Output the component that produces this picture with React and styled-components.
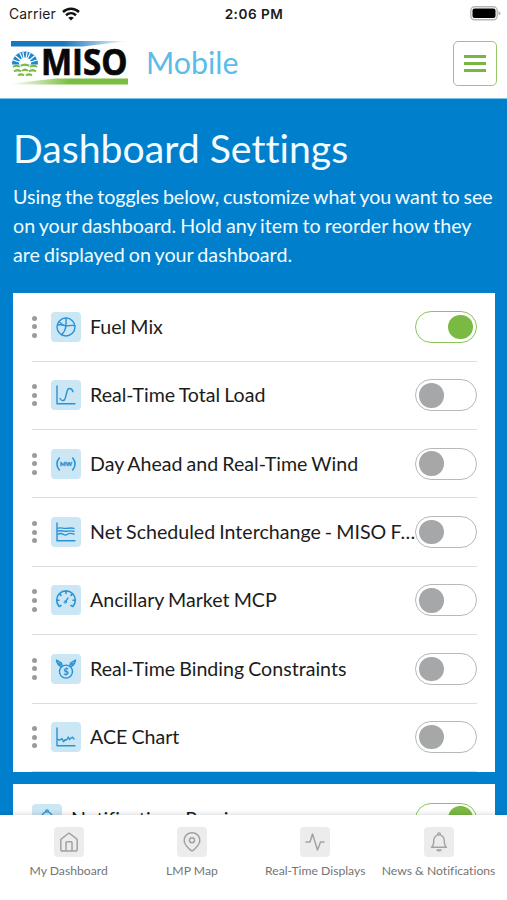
import React from 'react';
import styled, { createGlobalStyle } from 'styled-components';

const GlobalStyle = createGlobalStyle`
  * {
    box-sizing: border-box;
  }
  body {
    margin: 0;
    background: #fff;
    font-family: Lato, "Open Sans", sans-serif;
    font-variant-ligatures: none;
  }
`;

const Screen = styled.div`
  display: flex;
  flex-direction: column;
  height: 900px;
  overflow: hidden;
  background: #fff;
`;

const StatusBar = styled.div`
  display: grid;
  grid-template-columns: 1fr auto 1fr;
  align-items: center;
  flex: none;
  height: 28px;
  padding: 0 8px 0 9px;
  color: #1b1b1b;
  font-family: Inter, sans-serif;
`;

const Carrier = styled.div`
  display: flex;
  align-items: center;
  gap: 6px;
  font-size: 13.9px;
  letter-spacing: 0.2px;
`;

const Clock = styled.div`
  font-size: 13.6px;
  font-weight: 600;
  letter-spacing: 0.5px;
`;

const Battery = styled.div`
  display: flex;
  justify-content: flex-end;
  margin: 0 -2px 1px 0;
`;

const Header = styled.header`
  display: flex;
  align-items: center;
  flex: none;
  height: 71px;
  padding: 0 10px 0 10px;
  border-bottom: 1px solid #7cc3e8;
`;

const AppName = styled.div`
  flex: 1;
  padding: 0 0 2px 17px;
  color: #5bbce8;
  font-size: 30.4px;
  line-height: 40px;
`;

const MenuButton = styled.button`
  display: flex;
  flex-direction: column;
  align-items: center;
  justify-content: center;
  gap: 4px;
  width: 44px;
  height: 45px;
  padding: 0;
  border: 1.5px solid #98ca6c;
  border-radius: 5px;
  background: #fff;
`;

const MenuLine = styled.span`
  width: 22px;
  height: 3px;
  background: #78b644;
`;

const Content = styled.main`
  flex: 1;
  min-height: 0;
  overflow: hidden;
  padding: 26px 12px 0 13px;
  background: #0080cc;
  color: #f2fbff;
`;

const Title = styled.h1`
  margin: 0;
  font-size: 39.2px;
  font-weight: 400;
  line-height: 46px;
`;

const Intro = styled.p`
  margin: 10.6px 0 24px;
  font-size: 19.7px;
  line-height: 29.2px;
  word-spacing: -1px;
  white-space: nowrap;
`;

const IntroLine = styled.span`
  display: block;
  letter-spacing: ${({ $tight }) => ($tight ? '-0.07px' : 'normal')};
`;

const Card = styled.section`
  margin-bottom: 12px;
  padding: ${({ $inset }) => ($inset ? '1px 18.5px 0' : '0 18.5px')};
  background: #fff;
`;

const Row = styled.div`
  display: flex;
  align-items: center;
  height: 68.4px;
  border-bottom: 1px solid #dcdcdc;
`;

const Handle = styled.span`
  display: flex;
  flex-direction: column;
  gap: 3.6px;
  width: 5px;
  margin-right: 14px;
`;

const Dot = styled.span`
  width: 5px;
  height: 5px;
  border-radius: 50%;
  background: #9b9b9b;
`;

const IconTile = styled.span`
  display: flex;
  align-items: center;
  justify-content: center;
  flex: none;
  width: 30px;
  height: 30px;
  border-radius: 4px;
  background: ${({ $muted }) => ($muted ? '#ececec' : '#cbe6f5')};
  color: ${({ $muted }) => ($muted ? '#a2a2a2' : '#2b93d3')};
`;

const Label = styled.span`
  flex: 1;
  min-width: 0;
  margin: 0 -1px 0 9.5px;
  overflow: hidden;
  color: #1c1c1c;
  font-size: 19.6px;
  line-height: 28px;
  word-spacing: -0.9px;
  white-space: nowrap;
  text-overflow: ellipsis;
`;

const Toggle = styled.span`
  display: flex;
  align-items: center;
  justify-content: ${({ $on }) => ($on ? 'flex-end' : 'flex-start')};
  flex: none;
  width: 61.5px;
  height: 32px;
  padding: 0 3px;
  border: 1.5px solid ${({ $on }) => ($on ? '#8ac657' : '#b8b8b8')};
  border-radius: 16px;
`;

const Knob = styled.span`
  width: 24.5px;
  height: 24.5px;
  border-radius: 50%;
  background: ${({ $on }) => ($on ? '#7aba42' : '#a5a7a8')};
`;

const TabBar = styled.nav`
  display: flex;
  flex: none;
  height: 85px;
  padding: 12px 7px 0;
  background: #fff;
  box-shadow: 0 -1px 5px rgba(0, 0, 0, 0.14);
  z-index: 1;
`;

const Tab = styled.div`
  display: flex;
  flex-direction: column;
  align-items: center;
  gap: 4.5px;
  flex: 0 0 123.3px;
  color: #757575;
  font-size: 12.2px;
  line-height: 18px;
  white-space: nowrap;
`;

const LogoSvg = styled.svg`
  overflow: visible;
`;

const Icon = ({ children, width = 1.4 }) => (
  <svg
    width="22"
    height="22"
    viewBox="0 0 22 22"
    fill="none"
    stroke="currentColor"
    strokeWidth={width}
    strokeLinecap="round"
    strokeLinejoin="round"
  >
    {children}
  </svg>
);

const PieIcon = () => (
  <Icon>
    <circle cx="11" cy="11" r="9" />
    <path d="M11 2v8M4 5.6C6 7.8 8.500 9.300 11 10M2.400 9C5.500 8.500 8.500 9 11 10M19.800 9.500C16.500 9.200 13.500 9.500 11 10 10.500 13.500 9 16.500 6.600 18.800" />
  </Icon>
);

const LoadIcon = () => (
  <Icon>
    <path d="M2 2v17.8h18M5 14.5c1.4 2.7 4.3 3 5.3-.5l1.7-6.5c1-4 4.5-4 6 .2" />
  </Icon>
);

const WindIcon = () => (
  <Icon width={1.6}>
    <path d="M4.3 5C1.2 8.5 1.2 13.5 4.3 17M17.7 5c3.1 3.5 3.1 8.5 0 12" />
    <text
      x="11"
      y="13.3"
      textAnchor="middle"
      textLength="12"
      lengthAdjust="spacingAndGlyphs"
      fill="currentColor"
      strokeWidth="0.4"
      fontSize="6"
      fontWeight="900"
    >
      MW
    </text>
  </Icon>
);

const InterchangeIcon = () => (
  <Icon>
    <path d="M2 2v17.8h18" />
    <path d="M3 7.2c3-1 5 .4 8 .2s5-.8 8 0M3 10c3-.8 5 .5 8 .3s5-.8 8-.1M3 13.2c2-1.2 4-.8 5.5.3s3 .5 4.5-.5 4-.6 6 .2" />
  </Icon>
);

const GaugeIcon = () => (
  <Icon width={1.6}>
    <path d="M4.2 17.5A9.3 9.3 0 1 1 17.8 17.5M4.2 17.5l1.8-1M17.8 17.5l-1.8-1M2 11.2h2M20 11.2h-2M11 2.2v2.2M4.6 4.9 6 6.4M17.4 4.9 16 6.4" />
    <path d="M10.6 12.6 13 8.8" strokeWidth="1.3" />
    <circle cx="10.3" cy="13" r="1.2" strokeWidth="1" />
  </Icon>
);

const WingedCoinIcon = () => (
  <Icon>
    <circle cx="11" cy="13.6" r="6.5" />
    <path d="M7.2 8.3 6.5 5.2 1.5 2.2c.3 2.7 1.4 4.8 4.3 6.5M2.8 5.2l4 1.7M14.8 8.3l.7-3.1 5-3c-.3 2.7-1.4 4.8-4.3 6.5M19.2 5.2l-4 1.7" />
    <text
      x="11"
      y="17"
      textAnchor="middle"
      fill="currentColor"
      stroke="none"
      fontSize="9.5"
      fontWeight="900"
    >
      $
    </text>
  </Icon>
);

const AceIcon = () => (
  <Icon>
    <path d="M2 2v17.8h18M3 13.5l2 .5 2-1.5 1.500 3.2L10 13.8l1.5.2 1.8-3 1.2 2.5L16 12l1.5-.8 1.5 1.8" />
  </Icon>
);

const BellIcon = () => (
  <Icon>
    <path d="M3.5 16.3h15c-1.9-1.5-2.3-3.6-2.3-7.2A5.2 5.2 0 0 0 5.8 9.1C5.8 12.7 5.4 14.8 3.5 16.3ZM9.6 3.6c.1-2.3 2.7-2.3 2.8 0" />
    <path d="M9 19c.8 1 3.2 1 4 0Z" fill="currentColor" />
  </Icon>
);

const HomeIcon = () => (
  <Icon width={1.5}>
    <path d="M2.8 8.4 11 2l8.2 6.4v9.8q0 1.8-1.8 1.8H4.6q-1.8 0-1.8-1.8ZM8 20v-8.5q0-.8.8-.8h4.4q.8 0 .8.8V20" />
  </Icon>
);

const PinIcon = () => (
  <Icon width={1.5}>
    <path d="M11 20S3.2 14.6 3.2 9.2a7.8 7.5 0 0 1 15.6 0C18.8 14.6 11 20 11 20Z" />
    <circle cx="11" cy="9.3" r="2.5" />
  </Icon>
);

const PulseIcon = () => (
  <Icon width={1.5}>
    <path d="M2 11h4L8.5 3l5 16 3-8H20" />
  </Icon>
);

const Logo = () => (
  <LogoSvg width="119" height="46" viewBox="0 0 119 46">
    <defs>
      <linearGradient id="blueBand">
        <stop offset="0.45" stopColor="#1878bd" />
        <stop offset="1" stopColor="#fff" />
      </linearGradient>
      <linearGradient id="greenBand">
        <stop offset="0" stopColor="#fff" />
        <stop offset="0.5" stopColor="#7abf42" />
      </linearGradient>
      <clipPath id="sky">
        <path d="M2 24.5a13 13 0 0 1 26 0Z" />
      </clipPath>
    </defs>
    <path d="M1 1h117l-45 5.5H1Z" fill="url(#blueBand)" />
    <path d="M118 44.5H1v-1l45-5h72Z" fill="url(#greenBand)" />
    <g clipPath="url(#sky)">
      <path d="M0 8h30v18H0Z" fill="#1b88ce" />
      <path
        d="M15 24 0 19M15 24 1 12M15 24 7 7M15 24 12 7M15 24 18 7M15 24 23 7M15 24 29 12M15 24 30 19"
        stroke="#fff"
        strokeWidth="1.2"
      />
      <circle cx="15" cy="23.5" r="6" fill="#fff" />
    </g>
    <path
      d="M3 27q3.5-3 7 0M11 26q4-3 8 0M20 27q3.5-3 7 0M4 31.5q3.5-3 7 0M12 31q3-3 6 0M19 31.5q3.5-3 7 0M8 35.5q3-2.5 6 0M16 35.5q3-2.5 6 0"
      fill="#8ac64b"
      stroke="#79bb43"
      strokeWidth="1.8"
    />
    <text
      x="31"
      y="35.2"
      textLength="86.5"
      lengthAdjust="spacingAndGlyphs"
      fill="#080808"
      stroke="#080808"
      strokeWidth="0.7"
      fontFamily="Open Sans, sans-serif"
      fontSize="35"
      fontWeight="700"
    >
      MISO
    </text>
  </LogoSvg>
);

const items = [
  { label: 'Fuel Mix', icon: <PieIcon />, on: true },
  { label: 'Real-Time Total Load', icon: <LoadIcon /> },
  { label: 'Day Ahead and Real-Time Wind', icon: <WindIcon /> },
  { label: 'Net Scheduled Interchange - MISO Forecast', icon: <InterchangeIcon /> },
  { label: 'Ancillary Market MCP', icon: <GaugeIcon /> },
  { label: 'Real-Time Binding Constraints', icon: <WingedCoinIcon /> },
  { label: 'ACE Chart', icon: <AceIcon /> },
];

const tabs = [
  { label: 'My Dashboard', icon: <HomeIcon /> },
  { label: 'LMP Map', icon: <PinIcon /> },
  { label: 'Real-Time Displays', icon: <PulseIcon /> },
  { label: 'News & Notifications', icon: <BellIcon /> },
];

function SettingRow({ label, icon, on, fixed }) {
  return (
    <Row>
      {!fixed && (
        <Handle>
          <Dot />
          <Dot />
          <Dot />
        </Handle>
      )}
      <IconTile>{icon}</IconTile>
      <Label>{label}</Label>
      <Toggle $on={on}>
        <Knob $on={on} />
      </Toggle>
    </Row>
  );
}

function App() {
  return (
    <Screen>
      <GlobalStyle />
      <StatusBar>
        <Carrier>
          Carrier
          <svg width="18" height="14" viewBox="0 0 18 14" fill="none" stroke="#111" strokeWidth="2.5">
            <path d="M1 5c4.5-4.3 11.5-4.3 16 0M4 8.3c3-2.7 7-2.7 10 0" />
            <path d="M9 13.5 6.2 10.7c1.6-1.3 4-1.3 5.6 0Z" fill="#111" stroke="none" />
          </svg>
        </Carrier>
        <Clock>2:06 PM</Clock>
        <Battery>
          <svg width="31" height="15" viewBox="0 0 31 15">
            <rect x="0.8" y="0.8" width="26.4" height="13" rx="3.8" fill="#fff" stroke="#b5b5b5" strokeWidth="1.4" />
            <rect x="2.5" y="2.5" width="23" height="9.6" rx="2" fill="#000" />
            <path d="M28.5 5q2 .7 2 2.3t-2 2.3Z" fill="#b5b5b5" />
          </svg>
        </Battery>
      </StatusBar>

      <Header>
        <Logo />
        <AppName>Mobile</AppName>
        <MenuButton>
          <MenuLine />
          <MenuLine />
          <MenuLine />
        </MenuButton>
      </Header>

      <Content>
        <Title>Dashboard Settings</Title>
        <Intro>
          <IntroLine $tight>Using the toggles below, customize what you want to see</IntroLine>
          <IntroLine>on your dashboard. Hold any item to reorder how they</IntroLine>
          <IntroLine>are displayed on your dashboard.</IntroLine>
        </Intro>

        <Card>
          {items.map((item) => (
            <SettingRow key={item.label} {...item} />
          ))}
        </Card>

        {/* Notifications stay in place, so the row has no drag handle */}
        <Card $inset>
          <SettingRow label="Notifications Preview" icon={<BellIcon />} on fixed />
        </Card>
      </Content>

      <TabBar>
        {tabs.map((tab) => (
          <Tab key={tab.label}>
            <IconTile $muted>{tab.icon}</IconTile>
            {tab.label}
          </Tab>
        ))}
      </TabBar>
    </Screen>
  );
}

export default App;
